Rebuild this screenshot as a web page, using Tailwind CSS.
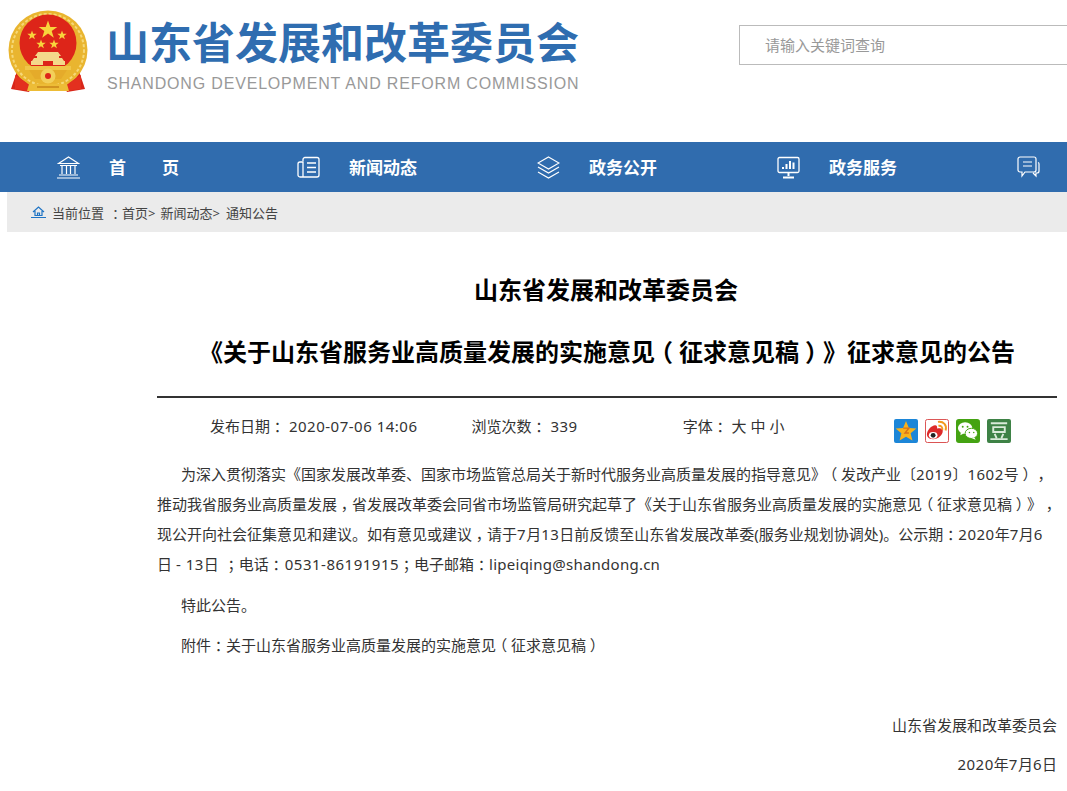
<!DOCTYPE html>
<html lang="zh-CN">
<head>
    <meta charset="UTF-8">
    <title>山东省发展和改革委员会</title>
    <script src="https://cdn.jsdelivr.net/npm/@tailwindcss/browser@4"></script>
</head>
<body class="bg-white h-[791px] overflow-hidden font-['Noto_Sans','Noto_Sans_CJK_SC',sans-serif] text-[#333] [text-spacing-trim:space-all]">
    <!-- header -->
    <header class="h-[142px] flex items-start relative">
        <svg class="ml-[7px] mt-[9px] w-[82px] h-[86px] shrink-0" viewBox="0 0 82 86">
            <path d="M10 62L4 80l18 3 6-12zM72 62l6 18-18 3-6-12z" fill="#d8261a"/>
            <circle cx="41" cy="41" r="39.500" fill="#e9b52f"/>
            <circle cx="41" cy="41" r="36" fill="none" stroke="#f6d878" stroke-width="2" stroke-dasharray="3 2"/>
            <circle cx="41" cy="34" r="28.500" fill="#dd2519"/>
            <path d="M41 11.500l2.300 6.500h7l-5.600 4.100 2.100 6.700-5.800-4.200-5.800 4.200 2.100-6.700-5.600-4.100h7z" fill="#f8d43c"/>
            <path d="M25 21.500l1.200 3.300h3.500l-2.800 2.100 1 3.300-2.900-2-2.900 2 1-3.300-2.800-2.100h3.500zM55 21.500l1.200 3.300h3.500l-2.800 2.100 1 3.300-2.900-2-2.900 2 1-3.300-2.800-2.100h3.500zM34 30.500l1.200 3.300h3.500l-2.800 2.100 1 3.300-2.900-2-2.900 2 1-3.300-2.800-2.100h3.500zM47 30.500l1.200 3.300h3.500l-2.800 2.100 1 3.300-2.900-2-2.900 2 1-3.300-2.800-2.100h3.500z" fill="#f8d43c"/>
            <path d="M31 43h20l3 4H28zM30 47h22v2H30zM27 49l-2 3h32l-2-3zM24 52h34v4H24z" fill="#f4d98a"/>
            <path d="M36 52h10v4H36z" fill="#dd2519"/>
            <path d="M18 57h46v4H18z" fill="#f0c648"/>
            <path d="M22 61h38l-6 9H28z" fill="#e5ab2a"/>
            <circle cx="41" cy="67" r="7.500" fill="#f3cf5a"/>
            <circle cx="41" cy="67" r="3" fill="#dd2519"/>
            <path d="M8 66l12 8 4 8-16-2zM74 66l-12 8-4 8 16-2z" fill="#e3301f"/>
            <path d="M22 75h38l2 7H20z" fill="#edbc36"/>
            <path d="M30 78h22" stroke="#c9861a" stroke-width="1.500"/>
        </svg>
        <div class="ml-[17px] mt-[15px] w-[480px]">
            <div class="text-[43px] leading-[55px] font-bold text-[#2f6db0] whitespace-nowrap">山东省发展和改革委员会</div>
            <div class="ml-[1px] font-['Liberation_Sans'] text-[16px] leading-5 mt-[4px] text-[#999] tracking-[0.82px] whitespace-nowrap">SHANDONG DEVELOPMENT AND REFORM COMMISSION</div>
        </div>
        <div class="absolute left-[739px] top-[25px] w-[340px] h-[40px] border border-[#bbb] pl-[25px] text-[15px] leading-[38px] text-[#999]">请输入关键词查询</div>
    </header>

    <!-- nav -->
    <nav class="h-[50px] bg-[#306cae] flex text-white text-[17px] font-bold leading-[50px]">
        <div class="w-[240px] flex items-center pl-[57px]">
            <svg class="w-[23px] h-[23px]" viewBox="0 0 23 23" fill="none" stroke="#fff" stroke-width="1.200"><path d="M1.500 7.500L11.500 1l10 6.500zM3 9.500h17M5 10v8M9.500 10v8M13.500 10v8M18 10v8M2 19h19M0 22h23"/></svg>
            <span class="ml-[29px] w-[70px] flex justify-between pt-[2px]"><span>首</span><span>页</span></span>
        </div>
        <div class="w-[240px] flex items-center pl-[57px]">
            <svg class="w-[23px] h-[23px]" viewBox="0 0 23 23" fill="none" stroke="#fff" stroke-width="1.300"><path d="M6 5V3.500a2 2 0 0 1 2-2h12a2 2 0 0 1 2 2V19a2 2 0 0 1-2 2H3a2 2 0 0 1-2-2V8a2 2 0 0 1 2-2h3v15M10 7h9M10 11.500h9M10 16h9"/></svg>
            <span class="ml-[29px] pt-[2px]">新闻动态</span>
        </div>
        <div class="w-[240px] flex items-center pl-[57px]">
            <svg class="w-[23px] h-[23px]" viewBox="0 0 23 23" fill="none" stroke="#fff" stroke-width="1.200"><path d="M11.500 1L22 7l-10.500 6L1 7zM1 11l10.500 6L22 11M1 16l10.500 6L22 16"/></svg>
            <span class="ml-[29px] pt-[2px]">政务公开</span>
        </div>
        <div class="w-[240px] flex items-center pl-[57px]">
            <svg class="w-[23px] h-[23px]" viewBox="0 0 23 23" fill="none" stroke="#fff" stroke-width="1.300"><rect x="1" y="1.500" width="21" height="15" rx="1.500"/><path d="M6 13v-2M9.500 13V8M13 13V5M16.500 13V6.500" stroke-width="2"/><path d="M11.500 17v3M6 21.500h11" stroke-width="2"/></svg>
            <span class="ml-[29px] pt-[2px]">政务服务</span>
        </div>
        <div class="flex items-center pl-[57px]">
            <svg class="w-[23px] h-[23px]" viewBox="0 0 23 23" fill="none" stroke="#fff" stroke-width="1.200"><path d="M3 1h14a2 2 0 0 1 2 2v11a2 2 0 0 1-2 2H8l-3 4v-4H3a2 2 0 0 1-2-2V3a2 2 0 0 1 2-2zM6 6h9M6 10h9M21 6.500a1.500 1.500 0 0 1 1 1.500v7a2 2 0 0 1-2 2h-1v3l-3-3"/></svg>
        </div>
    </nav>

    <!-- breadcrumb -->
    <div class="ml-[7px] h-[40px] bg-[#ebebeb] flex items-center pl-[24px] text-[13px] text-[#444] pt-[4px]">
        <svg class="w-[15px] h-[12px] mr-[6px] -mt-[4px]" viewBox="0 0 15 12" fill="none" stroke="#1f74c4" stroke-width="1.200"><path d="M2 6l5.500-5L13 6M4 5v4.500h7V5M6.500 9.500V7h2v2.500M0 11.500h15"/></svg>
        <span>当前位置</span><span class="ml-[5px]"><span class="[font-feature-settings:'halt'] px-[3.25px]">：</span>首页&gt;</span><span class="ml-[5px]">新闻动态&gt;</span><span class="ml-[6px]">通知公告</span>
    </div>

    <!-- article -->
    <main class="ml-[157px] w-[900px]">
        <h1 class="mt-[40px] pr-[2px] text-[24px] leading-[36px] font-bold text-black text-center whitespace-nowrap h-[36px]">山东省发展和改革委员会</h1>
        <h2 class="mt-[26px] text-[24px] leading-[36px] font-bold text-black text-center whitespace-nowrap h-[36px]">《关于山东省服务业高质量发展的实施意见<span class="[font-feature-settings:'halt'] px-[6px]">（</span>征求意见稿<span class="[font-feature-settings:'halt'] px-[6px]">）</span>》征求意见的公告</h2>
        <div class="mt-[26px] border-t-2 border-[#333] h-[56px] flex items-center text-[15px] text-[#333] relative pt-[3px]">
            <span class="ml-[53px]">发布日期<span class="[font-feature-settings:'halt'] px-[3.75px]">：</span> <span class="tracking-[0.5px]">2020-07-06 14:06</span></span>
            <span class="ml-[54px]">浏览次数<span class="[font-feature-settings:'halt'] px-[3.75px]">：</span> <span class="tracking-[0.5px]">339</span></span>
            <span class="ml-[105px]">字体<span class="[font-feature-settings:'halt'] px-[3.75px]">：</span> 大 中 小</span>
            <div class="absolute left-[737px] top-[21px] flex gap-[7px]">
                <svg class="w-[24px] h-[24px]" viewBox="0 0 25 25"><rect width="25" height="25" rx="2" fill="#1c86d8"/><path d="M12.500 2l3 7.300 7.800.6-6 5 1.900 7.600-6.700-4.100-6.700 4.100 1.900-7.600-6-5 7.800-.6z" fill="#f7b21b"/><path d="M9.500 9.500h6l-4 5h4" fill="none" stroke="#d9701a" stroke-width="1.500"/></svg>
                <svg class="w-[24px] h-[24px]" viewBox="0 0 25 25"><rect x=".5" y=".5" width="24" height="24" rx="2" fill="#fff" stroke="#d94a4a"/><path d="M2 16c0-4 5-9.500 8.500-9.500 2 0 2.500 1.500 2 3.500 3-1 6-.5 6 2 .3 5-5 9-10 9S2 18.500 2 16z" fill="#dd2a2a"/><ellipse cx="8.500" cy="17" rx="4.500" ry="3.500" fill="#fff"/><circle cx="8.500" cy="17" r="2.500" fill="#222"/><path d="M13.500 3c6-.8 9.500 3.500 8 9M14 7c3-.4 4.500 1.800 4 4.500" fill="none" stroke="#f29a1f" stroke-width="2"/></svg>
                <svg class="w-[24px] h-[24px]" viewBox="0 0 25 25"><rect width="25" height="25" rx="3" fill="#44a312"/><ellipse cx="9.500" cy="9.500" rx="7.500" ry="6.200" fill="#fff"/><path d="M5 14l-.5 3 3.500-2z" fill="#fff"/><ellipse cx="16" cy="15" rx="6.500" ry="5.300" fill="#fff" stroke="#44a312"/><path d="M19 19l1.500 2.500-4-1.500z" fill="#fff"/><circle cx="7" cy="8" r="1" fill="#44a312"/><circle cx="12" cy="8" r="1" fill="#44a312"/><circle cx="14" cy="14" r=".8" fill="#44a312"/><circle cx="18.500" cy="14" r=".8" fill="#44a312"/></svg>
                <svg class="w-[24px] h-[24px]" viewBox="0 0 25 25"><rect width="25" height="25" rx="2" fill="#3e8246"/><path d="M4 4.500h17M6.500 8.500h12v5h-12zM8 15.500l2 4.500M17 15.500l-2 4.500M3.500 21h18" fill="none" stroke="#d9ead9" stroke-width="2"/></svg>
            </div>
        </div>
        <div class="mt-[7px] text-[15px] leading-[30px] text-[#333] whitespace-nowrap">
            <p class="indent-[24px]">为深入贯彻落实《国家发展改革委、国家市场监管总局关于新时代服务业高质量发展的指导意见》<span class="[font-feature-settings:'halt'] px-[3.75px]">（</span>发改产业〔<span class="tracking-[0.5px]">2019</span>〕<span class="tracking-[0.5px]">1602</span>号<span class="[font-feature-settings:'halt'] px-[3.75px]">）</span><span class="[font-feature-settings:'halt'] px-[3.75px]">，</span><br>推动我省服务业高质量发展<span class="[font-feature-settings:'halt'] px-[3.75px]">，</span>省发展改革委会同省市场监管局研究起草了《关于山东省服务业高质量发展的实施意见<span class="[font-feature-settings:'halt'] px-[3.75px]">（</span>征求意见稿<span class="[font-feature-settings:'halt'] px-[3.75px]">）</span>》<span class="[font-feature-settings:'halt'] px-[3.75px]">，</span><br>现公开向社会征集意见和建议。如有意见或建议<span class="[font-feature-settings:'halt'] px-[3.75px]">，</span>请于<span class="tracking-[0.5px]">7</span>月<span class="tracking-[0.5px]">13</span>日前反馈至山东省发展改革委(服务业规划协调处)。公示期<span class="[font-feature-settings:'halt'] px-[3.75px]">：</span><span class="tracking-[0.5px]">2020</span>年<span class="tracking-[0.5px]">7</span>月<span class="tracking-[0.5px]">6</span><br>日 <span class="tracking-[0.5px]">- 13</span>日 <span class="ml-[1px] [font-feature-settings:'halt'] px-[3.75px]">；</span>电话<span class="[font-feature-settings:'halt'] px-[3.75px]">：</span><span class="ml-[1px] tracking-[0.5px]">0531-86191915</span><span class="[font-feature-settings:'halt'] px-[3.75px]">；</span>电子邮箱<span class="[font-feature-settings:'halt'] px-[3.75px]">：</span><span class="tracking-[0.25px]">lipeiqing@shandong.cn</span></p>
            <p class="indent-[24px] mt-[11px]">特此公告。</p>
            <p class="indent-[24px] mt-[10px]">附件<span class="[font-feature-settings:'halt'] px-[3.75px]">：</span>关于山东省服务业高质量发展的实施意见<span class="[font-feature-settings:'halt'] px-[3.75px]">（</span>征求意见稿<span class="[font-feature-settings:'halt'] px-[3.75px]">）</span></p>
            <p class="text-right mt-[50px]">山东省发展和改革委员会</p>
            <p class="text-right mt-[9px]"><span class="tracking-[0.5px]">2020</span>年<span class="tracking-[0.5px]">7</span>月<span class="tracking-[0.5px]">6</span>日</p>
        </div>
    </main>
</body>
</html>
